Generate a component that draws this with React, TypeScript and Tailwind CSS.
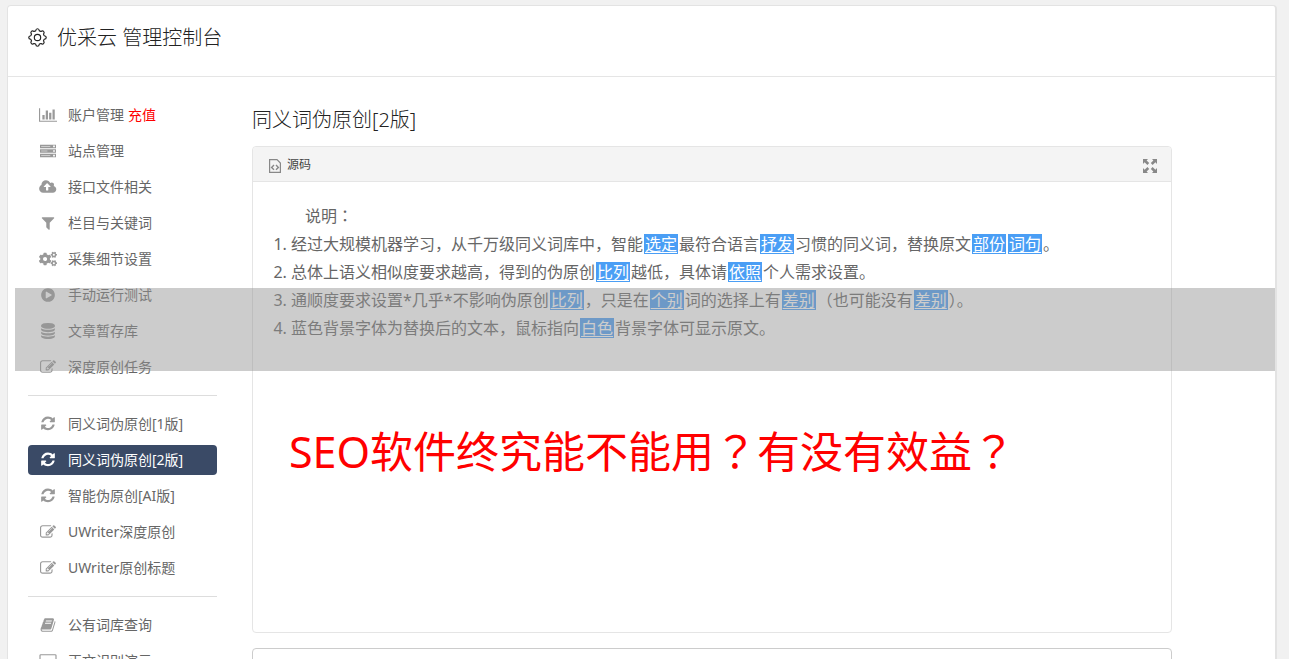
import React, { useState } from 'react';
import { FaCogs } from 'react-icons/fa';

interface IconShape {
  viewBox: string;
  d: string;
}

const shapes: Record<string, IconShape> = {
  chart: {
    viewBox: '0 0 2048 1792',
    d: 'M640 896v512h-256v-512h256zm384-512v1024h-256v-1024h256zm1024 1152v128h-2048v-1536h128v1408h1920zm-640-896v768h-256v-768h256zm384-384v1152h-256v-1152h256z',
  },
  server: {
    viewBox: '0 0 1792 1792',
    d: 'M0 192h1792v384h-1792zM128 352v64h1024v-64zM1472 288v192h192v-192zM0 704h1792v384h-1792zM128 864v64h704v-64zM1472 800v192h192v-192zM0 1216h1792v384h-1792zM128 1376v64h1024v-64zM1472 1312v192h192v-192z',
  },
  cloud: {
    viewBox: '0 0 1856 1792',
    d: 'M1216 864q0-14-9-23l-352-352q-9-9-23-9t-23 9l-351 351q-10 12-10 24 0 14 9 23t23 9h224v352q0 13 9.5 22.5t22.5 9.5h192q13 0 22.5-9.5t9.5-22.5v-352h224q13 0 22.5-9.5t9.5-22.5zm640 288q0 159-112.5 271.5t-271.5 112.5h-1088q-185 0-316.5-131.5t-131.5-316.5q0-130 70-240t188-165q-2-30-2-43 0-212 150-362t362-150q156 0 285.5 87t188.5 231q71-62 166-62 106 0 181 75t75 181q0 76-41 138 130 31 213.5 135.5t83.5 238.5z',
  },
  filter: {
    viewBox: '0 0 1792 1792',
    d: 'M1595 295q17 41-14 70l-493 493v742q0 42-39 59-13 5-25 5-27 0-45-19l-256-256q-19-19-19-45v-486l-493-493q-31-29-14-70 17-39 59-39h1280q42 0 59 39z',
  },
  play: {
    viewBox: '0 0 1792 1792',
    d: 'M896 128q209 0 385.5 103t279.5 279.5 103 385.5-103 385.5-279.5 279.5-385.5 103-385.5-103-279.5-279.5-103-385.5 103-385.5 279.5-279.5 385.5-103zm384 823q32-18 32-55t-32-55l-544-320q-31-19-64-1-32 19-32 56v640q0 37 32 56 16 8 32 8 17 0 32-9z',
  },
  database: {
    viewBox: '0 0 1792 1792',
    d: 'M896 768q237 0 443-43t325-127v170q0 69-103 128t-280 93.5-385 34.5-385-34.5-280-93.5-103-128v-170q119 84 325 127t443 43zm0 768q237 0 443-43t325-127v170q0 69-103 128t-280 93.5-385 34.5-385-34.5-280-93.5-103-128v-170q119 84 325 127t443 43zm0-384q237 0 443-43t325-127v170q0 69-103 128t-280 93.5-385 34.5-385-34.5-280-93.5-103-128v-170q119 84 325 127t443 43zm0-1152q208 0 385 34.5t280 93.5 103 128v128q0 69-103 128t-280 93.5-385 34.5-385-34.5-280-93.5-103-128v-128q0-69 103-128t280-93.5 385-34.5z',
  },
  edit: {
    viewBox: '0 0 1792 1792',
    d: 'M888 1184l116-116-152-152-116 116v56h96v96h56zm440-720q-16-16-33 1l-350 350q-17 17-1 33t33-1l350-350q17-17 1-33zm80 594v190q0 119-84.5 203.5t-203.5 84.5h-832q-119 0-203.5-84.5t-84.5-203.5v-832q0-119 84.5-203.5t203.5-84.5h832q63 0 117 25 15 7 18 23 3 17-9 29l-49 49q-14 14-32 8-23-6-45-6h-832q-66 0-113 47t-47 113v832q0 66 47 113t113 47h832q66 0 113-47t47-113v-126q0-13 9-22l64-64q15-15 35-7t20 29zm-96-738l288 288-672 672h-288v-288zm444 132l-92 92-288-288 92-92q28-28 68-28t68 28l152 152q28 28 28 68t-28 68z',
  },
  refresh: {
    viewBox: '0 -64 1536 1792',
    d: 'M1511 928q0 5-1 7-64 268-268 434.5t-478 166.5q-146 0-282.5-55t-243.5-157l-129 129q-19 19-45 19t-45-19-19-45v-448q0-26 19-45t45-19h448q26 0 45 19t19 45-19 45l-137 137q71 66 161 102t187 36q134 0 250-65t186-179q11-17 53-117 8-23 30-23h192q13 0 22.5 9.5t9.5 22.5zm25-800v448q0 26-19 45t-45 19h-448q-26 0-45-19t-19-45 19-45l138-138q-148-137-349-137-134 0-250 65t-186 179q-11 17-53 117-8 23-30 23h-199q-13 0-22.5-9.5t-9.5-22.5v-7q65-268 270-434.5t480-166.5q146 0 284 55.5t245 156.5l130-129q19-19 45-19t45 19 19 45z',
  },
  book: {
    viewBox: '0 0 1792 1792',
    d: 'M1703 478q40 57 18 129l-275 906q-19 64-76.5 107.5t-122.5 43.5h-923q-77 0-148.5-53.5t-99.5-131.5q-24-67-2-127 0-4 3-27t4-37q1-8-3-21.5t-3-19.5q2-11 8-21t16.5-23.5 16.5-23.5q23-38 45-91.5t30-91.5q3-10 .5-30t-.5-28q3-11 17-28t17-23q21-36 42-92t25-90q1-9-2.5-32t.5-28q4-13 22-30.5t22-22.5q19-26 42.5-84.5t27.5-96.5q1-8-3-25.5t-2-26.5q2-8 9-18t18-23 17-21q8-12 16.5-30.5t15-35 16-36 19.5-32 26.5-23.5 36-11.5 47.5 5.5l-1 3q38-9 51-9h761q74 0 114 56t18 130l-274 906q-36 119-71.5 153.5t-128.5 34.5h-869q-27 0-38 15-11 16-1 43 24 70 144 70h923q29 0 56-15.5t35-41.5l300-987q7-22 5-57 38 15 59 43zm-1064 2q-4 13 2 22.5t20 9.5h608q13 0 25.5-9.5t16.5-22.5l21-64q4-13-2-22.5t-20-9.5h-608q-13 0-25.5 9.5t-16.5 22.5zm-83 256q-4 13 2 22.5t20 9.5h608q13 0 25.5-9.5t16.5-22.5l21-64q4-13-2-22.5t-20-9.5h-608q-13 0-25.5 9.5t-16.5 22.5z',
  },
  laptop: {
    viewBox: '0 0 1920 1792',
    d: 'M160 128h1600q66 0 113 47t47 113v960q0 66-47 113t-113 47h-1600q-66 0-113-47t-47-113v-960q0-66 47-113t113-47zM160 256q-32 0-32 32v960q0 32 32 32h1600q32 0 32-32v-960q0-32-32-32zM0 1472h1920v128h-1920z',
  },
};

const MenuIcon: React.FC<{ name: string }> = ({ name }) => {
  if (name === 'cogs') return <FaCogs className="w-[18px] h-4" />;
  const shape = shapes[name];
  return (
    <svg viewBox={shape.viewBox} className="w-[18px] h-4" fill="currentColor" fillRule="evenodd">
      <path d={shape.d} />
    </svg>
  );
};

// Scalloped gear in the page header
const GearIcon: React.FC = () => (
  <svg viewBox="0 0 18 18" className="w-[19px] h-[19px] mb-0.5" fill="none" stroke="currentColor">
    <path
      d="M7.3 2.6Q7.5 .7 9 .7T10.7 2.6Q11.3 3.1 12.3 3.3Q13.7 2.1 14.8 3.2T14.7 5.7Q14.9 6.7 15.4 7.3Q17.3 7.5 17.3 9T15.4 10.7Q14.9 11.3 14.7 12.3Q15.9 13.7 14.8 14.8T12.3 14.7Q11.3 14.9 10.7 15.4Q10.5 17.3 9 17.3T7.3 15.4Q6.7 14.9 5.7 14.7Q4.3 15.9 3.2 14.8T3.3 12.3Q3.1 11.3 2.6 10.7Q.7 10.5 .7 9T2.6 7.3Q3.1 6.7 3.3 5.7Q2.1 4.3 3.2 3.2T5.7 3.3Q6.7 3.1 7.3 2.6Z"
      strokeWidth="1.1"
    />
    <circle cx="9" cy="9" r="3" strokeWidth="1.1" />
  </svg>
);

interface MenuEntry {
  icon: string;
  label: string;
  tag?: string;
}

const menuGroups: MenuEntry[][] = [
  [
    { icon: 'chart', label: '账户管理', tag: '充值' },
    { icon: 'server', label: '站点管理' },
    { icon: 'cloud', label: '接口文件相关' },
    { icon: 'filter', label: '栏目与关键词' },
    { icon: 'cogs', label: '采集细节设置' },
    { icon: 'play', label: '手动运行测试' },
    { icon: 'database', label: '文章暂存库' },
    { icon: 'edit', label: '深度原创任务' },
  ],
  [
    { icon: 'refresh', label: '同义词伪原创[1版]' },
    { icon: 'refresh', label: '同义词伪原创[2版]' },
    { icon: 'refresh', label: '智能伪原创[AI版]' },
    { icon: 'edit', label: 'UWriter深度原创' },
    { icon: 'edit', label: 'UWriter原创标题' },
  ],
  [
    { icon: 'book', label: '公有词库查询' },
    { icon: 'laptop', label: '正文识别演示' },
  ],
];

const Sidebar: React.FC = () => {
  const [active, setActive] = useState('同义词伪原创[2版]');

  return (
    <nav className="w-[189px] shrink-0">
      {menuGroups.map((group, index) => (
        <React.Fragment key={index}>
          {index > 0 && <hr className="my-[13px] border-[#dddddd]" />}
          <ul className="flex flex-col gap-1.5">
            {group.map((entry) => {
              const isActive = entry.label === active;
              return (
                <li key={entry.label}>
                  <a
                    href="#"
                    onClick={() => setActive(entry.label)}
                    className={`flex items-center h-[30px] pl-[11px] rounded text-sm whitespace-nowrap ${
                      isActive ? 'bg-[#3a4a66] text-white' : 'text-[#666666]'
                    }`}
                  >
                    <span className={`mr-[11px] ${isActive ? 'text-white' : 'text-[#999999]'}`}>
                      <MenuIcon name={entry.icon} />
                    </span>
                    {entry.label}
                    {entry.tag && <span className="ml-1 text-[#ff0000]">{entry.tag}</span>}
                  </a>
                </li>
              );
            })}
          </ul>
        </React.Fragment>
      ))}
    </nav>
  );
};

// Sets colons and question marks in the middle of their cell
const Text: React.FC<{ children: string }> = ({ children }) => (
  <>
    {children.split(/([：？])/).map((part, index) =>
      index % 2 === 1 ? (
        <span key={index} lang="zh-TW" className="font-['Noto_Sans','Noto_Sans_CJK_TC',sans-serif]">
          {part}
        </span>
      ) : (
        part
      )
    )}
  </>
);

// Replaced synonym, underlined on blue
const Word: React.FC<{ children: string }> = ({ children }) => (
  <span className="inline-block mx-px px-px leading-5 bg-[#4a9ef5] text-white underline underline-offset-2">
    {children}
  </span>
);

const Editor: React.FC = () => (
  <section className="border border-[#e5e5e5] rounded">
    <div className="flex items-center justify-between h-[35px] pl-4 pr-3.5 bg-[#f4f4f4] border-b border-[#e5e5e5] rounded-t">
      <button className="flex items-center gap-1.5 pt-0.5 text-xs text-[#444444]">
        <svg viewBox="0 0 12 14" className="w-3 h-3.5 mt-0.5" fill="none" stroke="#888888">
          <path d="M.6 .6h7.4l3.4 3.4v9.4H.6z" strokeWidth="1.2" />
          <path d="M5 6l-2.4 2.4L5 10.800M7 6l2.4 2.4L7 10.800" strokeWidth="1.4" />
        </svg>
        源码
      </button>
      <button aria-label="全屏" className="mt-1">
        <svg viewBox="0 0 14 14" className="w-3.5 h-3.5" fill="#888888">
          <path d="M0 0h5L3.6 1.5 6.2 4.1 4.4 5.9 1.6 3.3 0 5z" />
          <path d="M14 0v5l-1.6-1.7-2.8 2.6-1.8-1.8 2.6-2.6L9 0z" />
          <path d="M0 14V9l1.6 1.7 2.8-2.6 1.8 1.8-2.6 2.6L5 14z" />
          <path d="M14 14H9l1.4-1.5-2.6-2.6 1.8-1.8 2.8 2.6L14 9z" />
        </svg>
      </button>
    </div>
    <div className="min-h-[450px] pt-5 px-5 text-base leading-7 text-[#666666]">
      <p className="indent-8">
        <Text>说明：</Text>
      </p>
      <ol className="list-decimal pl-[18px]">
        <li>
          经过大规模机器学习，从千万级同义词库中，智能<Word>选定</Word>最符合语言<Word>抒发</Word>
          习惯的同义词，替换原文<Word>部份</Word>
          <Word>词句</Word>。
        </li>
        <li>
          总体上语义相似度要求越高，得到的伪原创<Word>比列</Word>越低，具体请<Word>依照</Word>
          个人需求设置。
        </li>
        <li>
          通顺度要求设置*几乎*不影响伪原创<Word>比列</Word>，只是在<Word>个别</Word>
          词的选择上有<Word>差别</Word>（也可能没有<Word>差别</Word>）。
        </li>
        <li>
          蓝色背景字体为替换后的文本，鼠标指向<Word>白色</Word>背景字体可显示原文。
        </li>
      </ol>
      <h2 className="mt-20 pl-4 text-[43px] leading-[60px] text-[#ff0000] whitespace-nowrap">
        <Text>SEO软件终究能不能用？有没有效益？</Text>
      </h2>
    </div>
  </section>
);

const App: React.FC = () => {
  return (
    <div className="h-screen overflow-hidden bg-[#f1f1f1] pt-[5px] pl-[7px] pr-3 font-['Noto_Sans','Noto_Sans_CJK_SC',sans-serif]">
      <div className="relative min-h-screen bg-white border border-r-2 border-[#e3e3e3] rounded">
        <header className="flex items-center gap-2.5 h-[71px] pl-5 pb-1.5 border-b border-[#e5e5e5] text-[#222222]">
          <GearIcon />
          <h1 className="text-xl font-light">优采云 管理控制台</h1>
        </header>

        <div className="flex gap-[35px] pt-[23px] pl-5 pr-[103px]">
          <Sidebar />
          <main className="flex-1 min-w-0">
            <h2 className="mt-1 mb-2.5 text-xl leading-8 font-light text-[#222222]">同义词伪原创[2版]</h2>
            <Editor />
            <div className="mt-[15px] h-40 border border-[#cccccc] rounded" />
          </main>
        </div>

        {/* Translucent strip across the page */}
        <div className="absolute top-[282px] left-[7px] right-0 h-[83px] bg-[#949494]/48 pointer-events-none" />
      </div>
    </div>
  );
};

export default App;
